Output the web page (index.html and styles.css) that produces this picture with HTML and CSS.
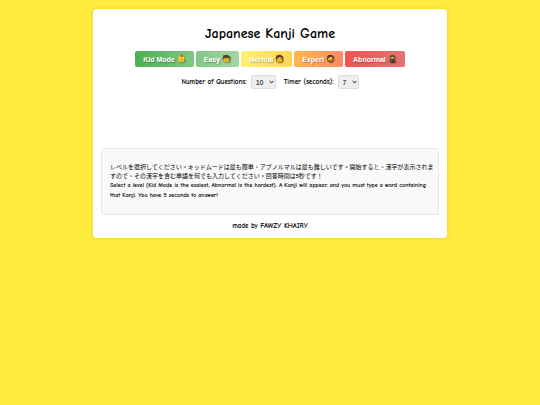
FILE: index.html
```
<!DOCTYPE html>
<html lang="en">
  <head>
    <meta charset="UTF-8">
    <meta name="viewport" content="width=device-width, initial-scale=1">
    <title>Japanese Kanji Game</title>
    <link rel="stylesheet" href="styles.css">
  </head>
  <body>
    <div class="container">
      <h1>Japanese Kanji Game</h1>
      <div class="levels">
        <button class="level kid">Kid Mode <span class="face">👶</span></button>
        <button class="level easy">Easy <span class="face">🧒</span></button>
        <button class="level normal">Normal <span class="face">🧑</span></button>
        <button class="level expert">Expert <span class="face">🧔</span></button>
        <button class="level abnormal">Abnormal <span class="face">🥷</span></button>
      </div>
      <div class="settings">
        <label for="questions">Number of Questions:</label>
        <select id="questions">
          <option>5</option>
          <option selected>10</option>
          <option>15</option>
          <option>20</option>
        </select>
        <label for="timer">Timer (seconds):</label>
        <select id="timer">
          <option>5</option>
          <option selected>7</option>
          <option>9</option>
        </select>
      </div>
      <div class="game"></div>
      <div class="instructions">
        <p class="japanese" lang="zh-TW">レベルを選択してください。キッドムードは最も簡単、アブノルマルは最も難しいです。開始すると、漢字が表示されますので、その漢字を含む単語を何でも入力してください。回答時間は<b>5</b>秒です！</p>
        <p class="english">Select a level (Kid Mode is the easiest, Abnormal is the hardest). A Kanji will appear, and you must type a word containing that Kanji. You have 5 seconds to answer!</p>
      </div>
      <footer>made by FAWZY KHAIRY</footer>
    </div>
  </body>
</html>
```
FILE: styles.css
```
body{
  margin: 0;
  padding: 9px 16px;
  background-color: #ffeb3b;
  color: black;
  font-family: "Comic Neue", "Comic Sans MS", "Open Sans", sans-serif;
}
.container{
  box-sizing: border-box;
  max-width: 354px;
  margin: 0 auto;
  padding: 16px 8px 8px;
  background-color: white;
  border-radius: 4px;
  box-shadow: 0 0 4px rgba(0, 0, 0, 0.1);
  text-align: center;
}
h1{
  margin: 0 0 8px;
  font-size: 14px;
  line-height: 18px;
  font-weight: bold;
}
.levels{
  display: flex;
  justify-content: center;
  gap: 2px;
}
.level{
  display: flex;
  align-items: center;
  gap: 2px;
  height: 16px;
  padding: 0 8px;
  border: none;
  border-radius: 2px;
  color: white;
  font-family: "Liberation Sans", Arial, sans-serif;
  font-size: 7px;
  font-weight: bold;
  white-space: nowrap;
  text-shadow: 1px 1px 1px rgba(0, 0, 0, 0.3);
}
.kid{
  background: linear-gradient(to right, #4caf50, #81c784);
}
.easy{
  background: linear-gradient(to right, #81c784, #a5d6a7);
}
.normal{
  background: linear-gradient(to right, #fff176, #ffd54f);
}
.expert{
  background: linear-gradient(to right, #ffb74d, #ff8a65);
}
.abnormal{
  background: linear-gradient(to right, #ef5350, #e57373);
}
.settings{
  display: flex;
  justify-content: center;
  align-items: center;
  gap: 4px;
  margin-top: 8px;
  font-size: 7px;
  font-weight: bold;
}
select{
  appearance: none;
  height: 14px;
  margin-right: 4px;
  padding: 0 11px 0 4px;
  border: 1px solid #ddd;
  border-radius: 2px;
  background: #efefef url("data:image/svg+xml,%3Csvg xmlns='http://www.w3.org/2000/svg' width='5' height='4' viewBox='0 0 5 4'%3E%3Cpath d='M.6 1l1.9 1.9L4.4 1' fill='none' stroke='%23111' stroke-width='1'/%3E%3C/svg%3E") no-repeat right 1px center;
  color: black;
  font-family: "Liberation Sans", Arial, sans-serif;
  font-size: 7px;
}
select:last-child{
  margin-right: 0;
}
.game{
  height: 59px;
}
.instructions{
  padding: 14px 4px 13px 8px;
  border: 1px solid #e6e6e6;
  border-radius: 4px;
  background-color: #f9f9f9;
  text-align: left;
}
.instructions p{
  margin: 0;
  font-size: 6px;
}
.japanese{
  font-family: "Comic Neue", "Comic Sans MS", "Noto Sans CJK TC", sans-serif;
  line-height: 9px;
}
.english{
  line-height: 10px;
  font-weight: bold;
}
footer{
  margin-top: 7px;
  font-size: 7px;
  line-height: 8px;
  font-weight: bold;
}
```
